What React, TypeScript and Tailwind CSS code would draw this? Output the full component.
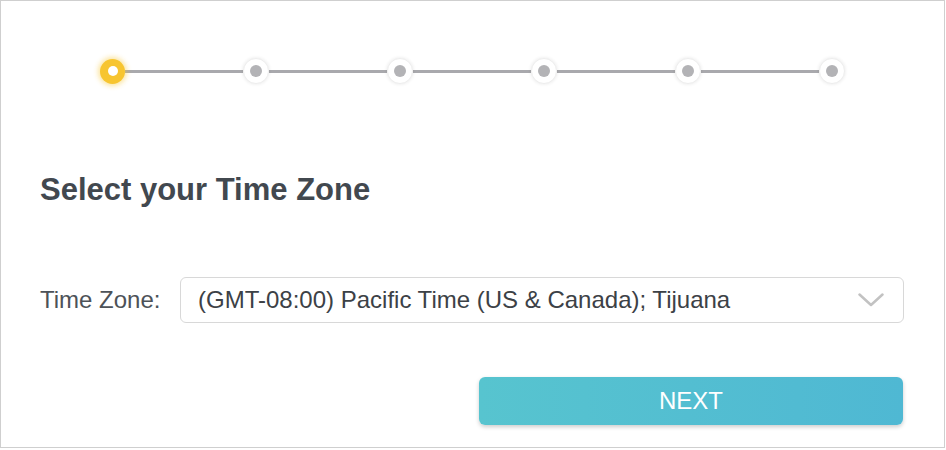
const steps = [0, 1, 2, 3, 4, 5]

const StepDot = ({ active }: { active: boolean }) =>
  active ? (
    <div className="flex items-center justify-center w-[25px] h-[25px] rounded-full bg-[#f7c530] shadow-[0_0_5px_2px_rgba(247,197,48,0.45)] z-10">
      <div className="w-[10px] h-[10px] rounded-full bg-white" />
    </div>
  ) : (
    <div className="flex items-center justify-center w-[26px] h-[26px] rounded-full bg-white border border-[#eeeeee] shadow-[0_0_3px_1px_rgba(0,0,0,0.06)] z-10">
      <div className="w-[12px] h-[12px] rounded-full bg-[#b3b3b6]" />
    </div>
  )

export default function App() {
  return (
    <div className="w-[946px] h-[450px] bg-white [font-family:'Liberation_Sans',Arial,sans-serif]">
      <div className="w-[945px] h-[448px] border border-[#cfcfcf] flex flex-col">
        {/* Progress */}
        <div className="flex items-center px-[99px] pt-[57px]">
          {steps.map((s) => (
            <div key={s} className={s === 0 ? 'flex items-center' : 'flex items-center flex-1'}>
              {s > 0 && <div className="flex-1 h-[3px] bg-[#a9a9ad]" />}
              <StepDot active={s === 0} />
            </div>
          ))}
        </div>

        <h1 className="mt-[90px] ml-[39px] text-[31px] font-bold text-[#42484f] leading-none">
          Select your Time Zone
        </h1>

        <div className="flex items-center mt-[72px] ml-[39px]">
          <label className="text-[24px] text-[#4d5258] w-[140px]">Time Zone:</label>
          <div className="flex items-center justify-between w-[724px] h-[46px] border border-[#d8d8d8] rounded-[6px] pl-[17px] pr-[19px]">
            <span className="text-[24px] text-[#3c4146]">(GMT-08:00) Pacific Time (US &amp; Canada); Tijuana</span>
            <svg width="26" height="14" viewBox="0 0 26 14" fill="none">
              <path d="M1.5 1.5 L13 12 L24.5 1.5" stroke="#c2c2c2" strokeWidth="2.5" strokeLinecap="round" strokeLinejoin="round" />
            </svg>
          </div>
        </div>

        <div className="flex justify-end mt-[54px] mr-[41px]">
          <button className="w-[424px] h-[48px] rounded-[6px] bg-gradient-to-r from-[#57c4cf] to-[#4fb8d3] text-white text-[24px] shadow-[0_2px_4px_rgba(0,0,0,0.2)]">
            NEXT
          </button>
        </div>
      </div>
    </div>
  )
}
